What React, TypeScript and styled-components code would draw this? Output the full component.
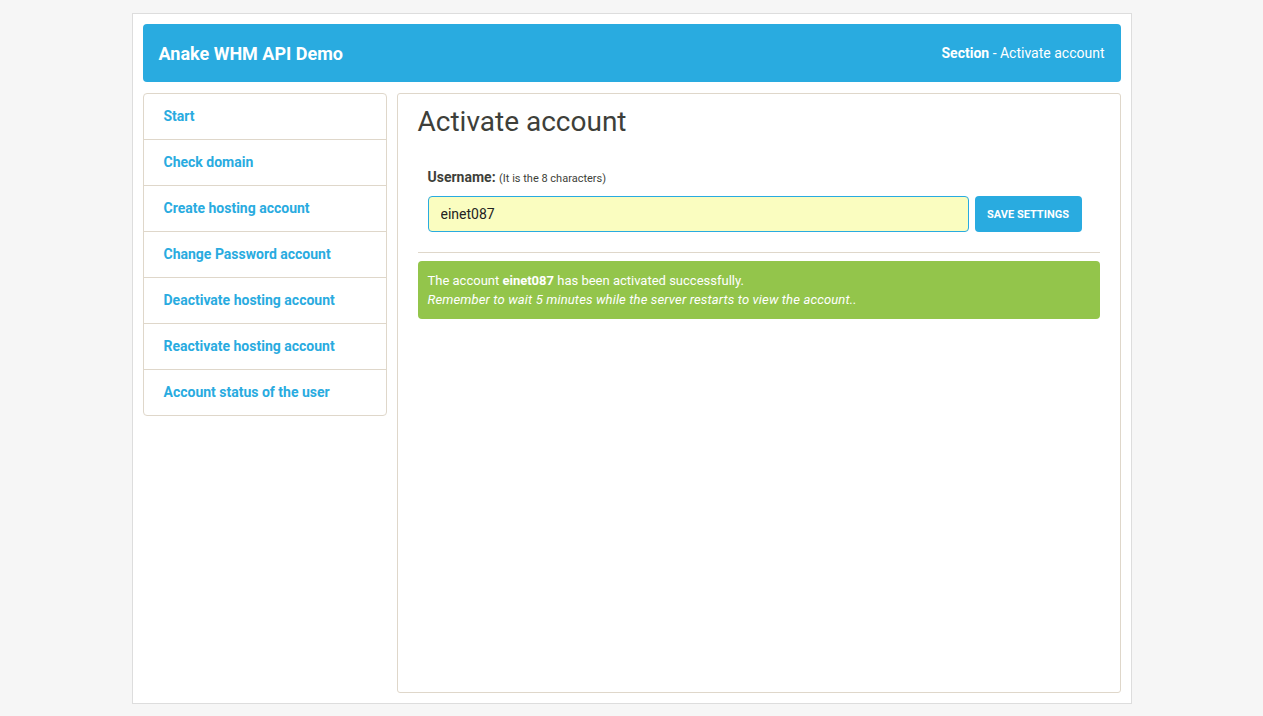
import React from "react";
import styled, { createGlobalStyle } from "styled-components";

const Global = createGlobalStyle`
  html, body { margin: 0; padding: 0; background: #f6f6f6; }
  body { font-family: Roboto, "Liberation Sans", Arial, sans-serif; color: #3e3f3a; }
  * { box-sizing: border-box; }
`;

const Page = styled.div`
  padding-top: 13px;
  padding-bottom: 12px;
`;

const Container = styled.div`
  width: 1000px;
  margin: 0 auto;
  background: #fff;
  border: 1px solid #dddddd;
  padding: 10px;
  display: flex;
  flex-direction: column;
  gap: 11px;
`;

const Header = styled.header`
  height: 58px;
  background: #29abe0;
  border-radius: 4px;
  display: flex;
  align-items: center;
  justify-content: space-between;
  padding: 0 16px;
  color: #fff;
`;

const Brand = styled.div`
  font-size: 18px;
  font-weight: 700;
`;

const Crumb = styled.div`
  font-size: 14px;
  b { font-weight: 700; }
`;

const Body = styled.div`
  display: flex;
  gap: 10px;
  align-items: flex-start;
`;

const Nav = styled.nav`
  width: 244px;
  flex: none;
  border: 1px solid #dfd7ca;
  border-radius: 4px;
  display: flex;
  flex-direction: column;
`;

const NavItem = styled.a<{ $last?: boolean }>`
  display: flex;
  align-items: center;
  height: ${(p) => (p.$last ? "45px" : "46px")};
  padding: 0 20px 2px;
  font-size: 14px;
  font-weight: 700;
  color: #29abe0;
  text-decoration: none;
  border-bottom: ${(p) => (p.$last ? "none" : "1px solid #dfd7ca")};
`;

const Main = styled.main`
  flex: 1;
  height: 600px;
  border: 1px solid #dfd7ca;
  border-radius: 3px;
  padding: 8px 20px 20px;
`;

const Title = styled.h1`
  margin: 0;
  font-size: 28px;
  font-weight: 400;
  line-height: 40px;
  color: #3e3f3a;
`;

const Form = styled.form`
  padding: 26px 10px 20px;
  border-bottom: 1px solid #dfd7ca;
`;

const Label = styled.label`
  display: block;
  font-size: 14px;
  font-weight: 700;
  color: #3e3f3a;
  line-height: 18px;
  margin-bottom: 8px;
`;

const Hint = styled.span`
  font-size: 11px;
  font-weight: 400;
`;

const Row = styled.div`
  display: flex;
  gap: 6px;
  padding-right: 8px;
`;

const Input = styled.input`
  flex: 1;
  height: 36px;
  border: 1px solid #29abe0;
  border-radius: 4px;
  background: #fafdc0;
  padding: 0 12px;
  font-family: Roboto, "Liberation Sans", Arial, sans-serif;
  font-size: 14px;
  color: #222;
  outline: none;
`;

const Button = styled.button`
  width: 107px;
  height: 36px;
  border: none;
  border-radius: 4px;
  background: #29abe0;
  color: #fff;
  font-family: Roboto, "Liberation Sans", Arial, sans-serif;
  font-size: 11px;
  font-weight: 700;
  text-transform: uppercase;
`;

const Alert = styled.div`
  margin-top: 8px;
  background: #93c54b;
  border-radius: 4px;
  padding: 10px 10px;
  color: #fff;
  font-size: 13px;
  line-height: 19px;
  em { font-style: italic; letter-spacing: 0.15px; }
`;

const items = [
  "Start",
  "Check domain",
  "Create hosting account",
  "Change Password account",
  "Deactivate hosting account",
  "Reactivate hosting account",
  "Account status of the user",
];

export default function App() {
  return (
    <>
      <Global />
      <Page>
        <Container>
          <Header>
            <Brand>Anake WHM API Demo</Brand>
            <Crumb>
              <b>Section</b> - Activate account
            </Crumb>
          </Header>
          <Body>
            <Nav>
              {items.map((t, i) => (
                <NavItem key={t} href="#" $last={i === items.length - 1}>
                  {t}
                </NavItem>
              ))}
            </Nav>
            <Main>
              <Title>Activate account</Title>
              <Form onSubmit={(e) => e.preventDefault()}>
                <Label>
                  Username: <Hint>(It is the 8 characters)</Hint>
                </Label>
                <Row>
                  <Input defaultValue="einet087" />
                  <Button type="submit">Save settings</Button>
                </Row>
              </Form>
              <Alert>
                The account <b>einet087</b> has been activated successfully.
                <br />
                <em>Remember to wait 5 minutes while the server restarts to view the account..</em>
              </Alert>
            </Main>
          </Body>
        </Container>
      </Page>
    </>
  );
}
